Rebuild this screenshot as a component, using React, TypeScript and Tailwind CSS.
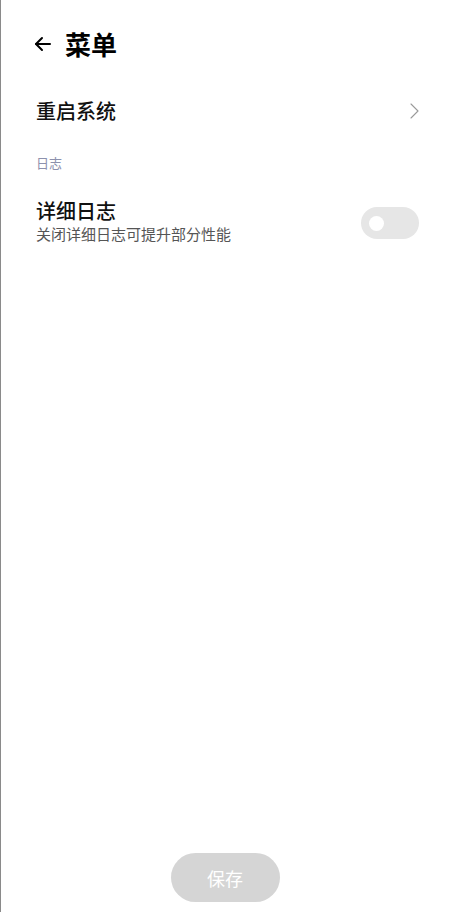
import React, { useState } from 'react';

const font = { fontFamily: '"Noto Sans CJK SC", "Noto Sans", sans-serif' };

function BackArrow() {
    return (
        <svg width="18" height="18" viewBox="0 0 18 18" fill="none" stroke="#000" strokeWidth="2" strokeLinecap="round" strokeLinejoin="round">
            <path d="M16 9H2" />
            <path d="M8 3L2 9l6 6" />
        </svg>
    );
}

function Chevron() {
    return (
        <svg width="9" height="16" viewBox="0 0 9 16" fill="none" stroke="#9a9a9a" strokeWidth="1.1" strokeLinecap="round" strokeLinejoin="round">
            <path d="M1 1l7 7-7 7" />
        </svg>
    );
}

export default function App() {
    const [verbose, setVerbose] = useState(false);

    return (
        <div className="relative h-[912px] w-[451px] overflow-hidden border-l border-[#8a8a8a] bg-white" style={font}>
            {/* Header */}
            <div className="flex h-[88px] items-center gap-[13px] pl-[33px] pb-[1px]">
                <BackArrow />
                <h1 className="text-[26px] font-bold leading-none text-black">菜单</h1>
            </div>

            {/* Restart */}
            <button className="flex h-[46px] w-full items-center justify-between pl-[35px] pr-[32px] text-left">
                <span className="text-[20px] font-medium leading-none text-[#111]">重启系统</span>
                <Chevron />
            </button>

            {/* Section label */}
            <div className="pl-[35px] pt-[22px] text-[13px] leading-none text-[#8d91ad]">日志</div>

            {/* Verbose log */}
            <div className="flex items-center justify-between pl-[35px] pr-[32px] pt-[32px]">
                <div className="flex flex-col gap-[5px]">
                    <span className="text-[20px] font-medium leading-none text-[#111]">详细日志</span>
                    <span className="text-[15px] leading-none text-[#555]">关闭详细日志可提升部分性能</span>
                </div>
                <button
                    onClick={() => setVerbose(!verbose)}
                    className={verbose
                        ? 'mt-[4px] flex h-[32px] w-[58px] items-center justify-end rounded-full bg-[#3482ff] px-[8px]'
                        : 'mt-[4px] flex h-[32px] w-[58px] items-center justify-start rounded-full bg-[#e6e6e6] px-[8px]'}
                >
                    <span className="block h-[15px] w-[15px] rounded-full bg-white" />
                </button>
            </div>

            {/* Save */}
            <div className="absolute bottom-[10px] left-0 right-0 flex justify-center">
                <button className="ml-[-2px] h-[49px] w-[109px] rounded-full bg-[#d5d5d5] text-[18px] leading-none text-white">
                    保存
                </button>
            </div>
        </div>
    );
}
